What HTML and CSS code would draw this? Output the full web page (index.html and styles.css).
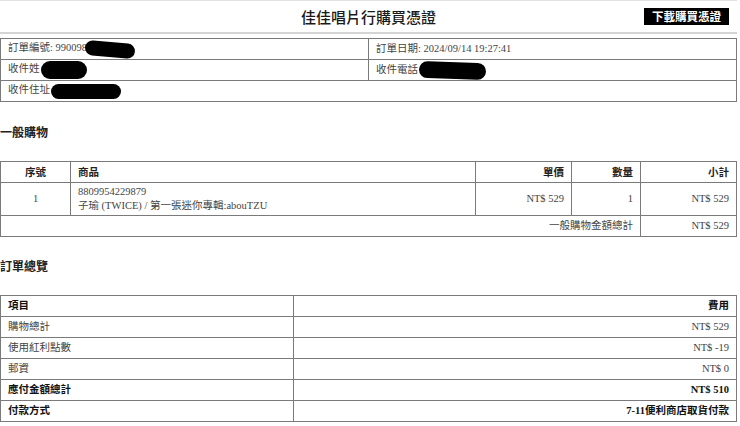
FILE: index.html
```html
<!DOCTYPE html>
<html lang="zh-Hant">
<head>
  <meta charset="UTF-8" />
  <meta name="viewport" content="width=device-width, initial-scale=1.0" />
  <title>佳佳唱片行購買憑證</title>
  <link rel="stylesheet" href="styles.css">
</head>
<body>
  <div class="page">
    <header class="top-bar">
      <span></span>
      <h1 class="title">佳佳唱片行購買憑證</h1>
      <button class="download-btn">下載購買憑證</button>
    </header>

    <table class="info-table">
      <tr>
        <td>訂單編號: 990098<span class="mask mask-order"></span></td>
        <td>訂單日期: 2024/09/14 19:27:41</td>
      </tr>
      <tr>
        <td>收件姓<span class="mask mask-name"></span></td>
        <td>收件電話<span class="mask mask-phone"></span></td>
      </tr>
      <tr>
        <td colspan="2">收件住址<span class="mask mask-addr"></span></td>
      </tr>
    </table>

    <h2 class="section-title">一般購物</h2>

    <table class="goods-table">
      <colgroup>
        <col class="col-no">
        <col>
        <col class="col-price">
        <col class="col-qty">
        <col class="col-price">
      </colgroup>
      <tr>
        <th class="center">序號</th>
        <th>商品</th>
        <th class="right">單價</th>
        <th class="right">數量</th>
        <th class="right">小計</th>
      </tr>
      <tr class="item-row">
        <td class="center">1</td>
        <td>8809954229879<br>子瑜 (TWICE) / 第一張迷你專輯:abouTZU</td>
        <td class="right">NT$ 529</td>
        <td class="right">1</td>
        <td class="right">NT$ 529</td>
      </tr>
      <tr>
        <td colspan="4" class="right">一般購物金額總計</td>
        <td class="right">NT$ 529</td>
      </tr>
    </table>

    <h2 class="section-title">訂單總覽</h2>

    <table class="summary-table">
      <colgroup>
        <col class="col-label">
        <col>
      </colgroup>
      <tr class="strong">
        <td>項目</td>
        <td class="right">費用</td>
      </tr>
      <tr>
        <td>購物總計</td>
        <td class="right">NT$ 529</td>
      </tr>
      <tr>
        <td>使用紅利點數</td>
        <td class="right">NT$ -19</td>
      </tr>
      <tr>
        <td>郵資</td>
        <td class="right">NT$ 0</td>
      </tr>
      <tr class="strong">
        <td>應付金額總計</td>
        <td class="right">NT$ 510</td>
      </tr>
      <tr class="strong">
        <td>付款方式</td>
        <td class="right">7-11便利商店取貨付款</td>
      </tr>
    </table>
  </div>
</body>
</html>
```

FILE: styles.css
```css
* {
  box-sizing: border-box;
  margin: 0;
  padding: 0;
}

body {
  background: #fff;
  color: #444;
  font-family: "Liberation Serif", "Noto Sans CJK TC", serif;
  font-size: 10.5px;
}

.page {
  width: 737px;
  border-top: 1px solid #e2e2e2;
}

.top-bar {
  display: grid;
  grid-template-columns: 1fr auto 1fr;
  align-items: center;
  height: 33px;
  border-bottom: 2px solid #d4d4d4;
}

.title {
  font-family: "Noto Sans CJK TC", sans-serif;
  font-size: 15px;
  font-weight: 500;
  color: #1a1a1a;
}

.download-btn {
  justify-self: end;
  margin-right: 8px;
  margin-top: -1px;
  background: #000;
  color: #fff;
  border: none;
  font-family: "Noto Sans CJK TC", sans-serif;
  font-size: 11.5px;
  font-weight: 700;
  line-height: 17px;
  padding: 0 8px;
}

table {
  width: 100%;
  border-collapse: collapse;
  border: 1px solid #9a9a9a;
}

td, th {
  border: 1px solid #7a7a7a;
  height: 21px;
  padding: 0 7px;
  text-align: left;
  vertical-align: middle;
  line-height: 14px;
}

th {
  font-family: "Noto Sans CJK TC", sans-serif;
  font-weight: 700;
  color: #222;
}

.center { text-align: center; }
.right { text-align: right; }

.info-table {
  margin-top: 4px;
}

.info-table td {
  width: 50%;
}

.mask {
  display: inline-block;
  vertical-align: middle;
  background: #000;
  border-radius: 10px;
}

.mask-order { width: 50px; height: 15px; transform: rotate(5deg); margin-left: -2px; }
.mask-name { width: 46px; height: 18px; margin-left: 1px; }
.mask-phone { width: 67px; height: 17px; margin-left: 1px; transform: rotate(2deg); }
.mask-addr { width: 70px; height: 15px; margin-left: 1px; }

.section-title {
  font-family: "Noto Sans CJK TC", sans-serif;
  font-size: 12px;
  font-weight: 700;
  color: #222;
  line-height: 16px;
  margin: 22px 0 21px;
}

.goods-table + .section-title {
  margin-top: 21px;
}

.col-no { width: 70px; }
.col-price { width: 96px; }
.col-qty { width: 69px; }
.col-label { width: 293px; }

.item-row td {
  height: 33px;
}

.summary-table .strong td {
  font-weight: 700;
  color: #111;
}
```
